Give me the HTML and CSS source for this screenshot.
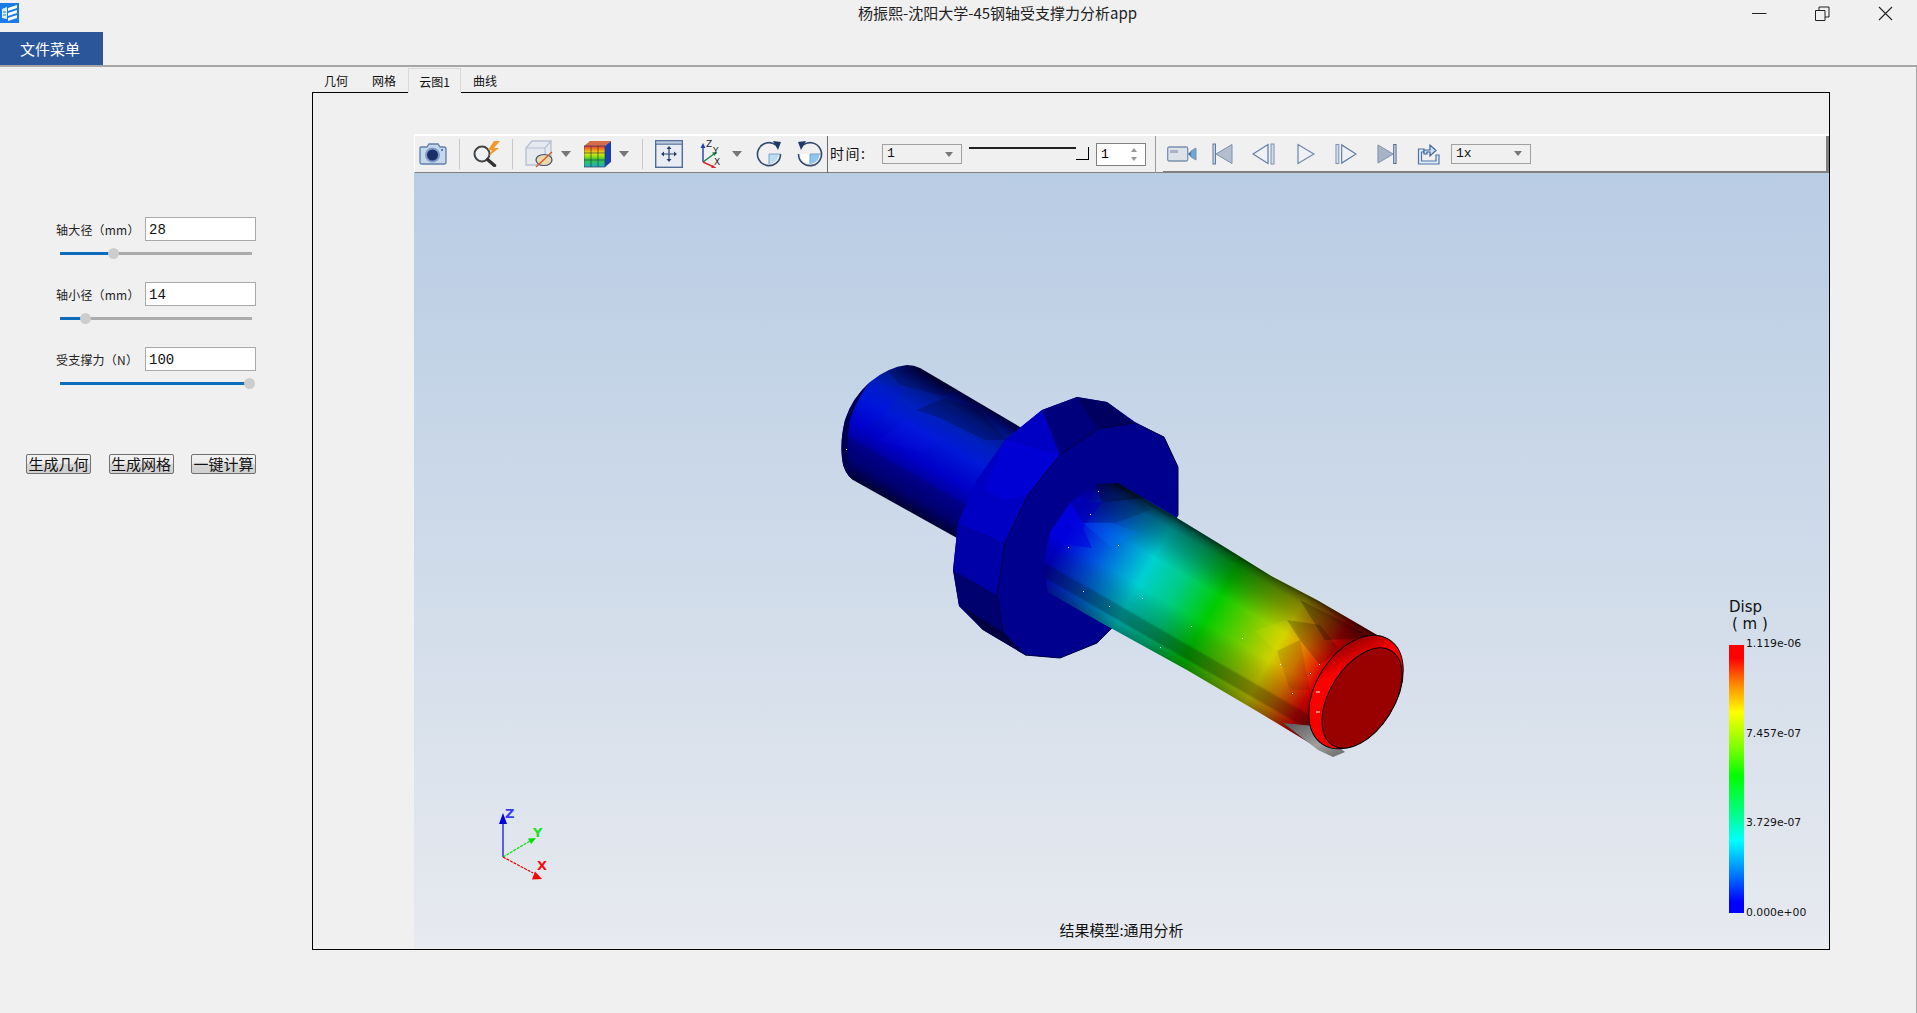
FILE: index.html
```html
<!DOCTYPE html>
<html lang="zh-CN">
<head>
<meta charset="utf-8">
<title>杨振熙-沈阳大学-45钢轴受支撑力分析app</title>
<link rel="stylesheet" href="styles.css">
</head>
<body>
<div class="app">
  <header class="titlebar">
    <svg class="app-icon" viewBox="0 0 19 20"><rect width="19" height="20" fill="#1a7ae8"/><path d="M2 6l5-2v12l-5-1z" fill="#dfeeff"/><path d="M8 5l9-3v3l-9 3zM8 10l9-3v3l-9 3zM8 15l9-3v3l-9 3z" fill="#fff"/><path d="M3 9h3M3 12h3" stroke="#1a7ae8"/></svg>
    <div class="title">杨振熙-沈阳大学-45钢轴受支撑力分析app</div>
    <div class="win-controls">
      <svg class="win-btn" viewBox="0 0 15 15"><path d="M0 7.5h14.5" stroke="#222" fill="none"/></svg>
      <svg class="win-btn" viewBox="0 0 15 15"><path d="M.5 4.5h9.5v10H.5zM4 4.5V1h10v10h-4" stroke="#222" fill="none"/></svg>
      <svg class="win-btn" viewBox="0 0 15 15"><path d="M1 1l13 13M14 1L1 14" stroke="#222" stroke-width="1.1" fill="none"/></svg>
    </div>
  </header>
  <nav class="menubar"><button class="file-menu">文件菜单</button></nav>
  <main class="content">
    <aside class="sidebar">
      <div class="field">
        <div class="field-row"><label class="field-label">轴大径（mm）</label><div class="input">28</div></div>
        <div class="slider"><div class="slider-fill" style="width:28%"><span class="slider-handle"></span></div></div>
      </div>
      <div class="field">
        <div class="field-row"><label class="field-label">轴小径（mm）</label><div class="input">14</div></div>
        <div class="slider"><div class="slider-fill" style="width:13.5%"><span class="slider-handle"></span></div></div>
      </div>
      <div class="field">
        <div class="field-row"><label class="field-label">受支撑力（N）</label><div class="input">100</div></div>
        <div class="slider"><div class="slider-fill" style="width:99%"><span class="slider-handle"></span></div></div>
      </div>
      <div class="actions">
        <button class="action">生成几何</button>
        <button class="action">生成网格</button>
        <button class="action">一键计算</button>
      </div>
    </aside>
    <section class="workspace">
      <div class="tabs">
        <div class="tab">几何</div>
        <div class="tab">网格</div>
        <div class="tab tab-active">云图1</div>
        <div class="tab">曲线</div>
      </div>
      <div class="pane">
        <div class="toolbar">
          <svg class="ml-5 w28" viewBox="0 0 28 22"><path d="M1 5q0-1 1-1h6l2-3h9l2 3h4q2 0 2 2v13q0 2-2 2H3q-2 0-2-2z" fill="#c5d8ee" stroke="#5f7da8" stroke-width="1.3"/><circle cx="13.5" cy="12" r="7.5" fill="#7f9bc4"/><circle cx="13.5" cy="12" r="5.5" fill="#1b2f6b"/><rect x="22" y="6" width="2" height="2" fill="#5f7da8"/></svg>
          <span class="sep ml-12"></span>
          <svg class="ml-12 w29" viewBox="0 0 29 26"><circle cx="10" cy="13" r="7.5" fill="#eef2f5" stroke="#444" stroke-width="2"/><path d="M15.5 18.5l7 6" stroke="#333" stroke-width="3.4" stroke-linecap="round"/><path d="M22 0l-6 9h4l-3 6 10-8h-5l6-7z" fill="#ee9a2a"/></svg>
          <span class="sep ml-11"></span>
          <svg class="ml-12 w28" viewBox="0 0 28 28"><path d="M1 8l6-7h19v17l-6 7H1z" fill="#e6e9ef" stroke="#b8c1d2" stroke-width="1.4"/><path d="M1 8h19v17M20 8l6-7" fill="none" stroke="#b8c1d2" stroke-width="1.2"/><ellipse cx="19" cy="20" rx="8" ry="5.5" fill="#e8d9a8" stroke="#3f4f74" stroke-width="1.2"/><path d="M11 27L27 12" stroke="#d8552a" stroke-width="1.3"/></svg>
          <svg class="ml-8 w10 drop" viewBox="0 0 10 6"><path d="M0 0h10L5 6z" fill="#777"/></svg>
          <svg class="ml-13 w27" viewBox="0 0 27 28"><path d="M0 6l6-5h21L21 6z" fill="#d86a4a"/><path d="M21 6l6-5v21l-6 5z" fill="#1a3fb0"/><defs><linearGradient id="cc" x1="0" y1="0" x2="0" y2="1"><stop offset="0" stop-color="#e33"/><stop offset=".35" stop-color="#ee0"/><stop offset=".65" stop-color="#3c3"/><stop offset="1" stop-color="#2ac"/></linearGradient></defs><rect y="6" width="21" height="21" fill="url(#cc)"/><path d="M0 6h21v21H0zM7 6v21M14 6v21M0 13h21M0 20h21" fill="none" stroke="#2a3a5c" stroke-width=".7"/></svg>
          <svg class="ml-8 w10 drop" viewBox="0 0 10 6"><path d="M0 0h10L5 6z" fill="#777"/></svg>
          <span class="sep ml-13"></span>
          <svg class="ml-12 w28" viewBox="0 0 28 28"><rect x=".7" y=".7" width="26.6" height="26.6" fill="#e9edf3" stroke="#4f6a94" stroke-width="1.4"/><rect x=".7" y=".7" width="26.6" height="3.5" fill="#b8c7dc" stroke="#4f6a94"/><path d="M14 8v12M8 14h12" stroke="#27406b" stroke-width="1.2"/><path d="M14 6l-2.5 3h5zM14 22l-2.5-3h5zM6 14l3-2.5v5zM22 14l-3-2.5v5z" fill="#27406b"/></svg>
          <svg class="ml-16 w24" viewBox="0 0 24 28"><path d="M4 22V6" stroke="#1c3fb5" stroke-width="1.4"/><path d="M4 3L1.5 8h5z" fill="#1c3fb5"/><path d="M4 22L15 14" stroke="#0e8a3a" stroke-width="1.4"/><path d="M18 12l-5 .5 2.500 3.500z" fill="#0e8a3a"/><path d="M4 22l11 5" stroke="#e0262a" stroke-width="1.4"/><path d="M18 28.500l-4.500-3.500-1.500 3.500z" fill="#e0262a"/><text class="axis-letter" x="7" y="7">Z</text><text class="axis-letter" x="14" y="14">Y</text><text class="axis-letter" x="15" y="25">X</text></svg>
          <svg class="ml-9 w10 drop" viewBox="0 0 10 6"><path d="M0 0h10L5 6z" fill="#777"/></svg>
          <svg class="ml-14 w26" viewBox="0 0 26 26"><path d="M13 13h9.500A10 10 0 0 1 13 23z" fill="#bcdcf2"/><path d="M13 13v10M13 13h11" stroke="#7aa2c8"/><path d="M20 4A11.500 11.500 0 1 0 24.500 13" fill="none" stroke="#33496e" stroke-width="1.600"/><path d="M17 0l8 1-3 8z" fill="#1f3a68"/></svg>
          <svg class="ml-15 w26" viewBox="0 0 26 26"><path d="M13 13H3.500A10 10 0 0 0 13 23z" fill="#fff"/><path d="M13 13h9.500A10 10 0 0 1 13 23z" fill="#8cc6ee"/><path d="M13 13v10M13 13h11" stroke="#7aa2c8"/><path d="M6 4A11.500 11.500 0 1 1 1.500 13" fill="none" stroke="#33496e" stroke-width="1.600"/><path d="M9 0L1 1l3 8z" fill="#1f3a68"/></svg>
          <span class="vline ml-5"></span>
          <span class="time-label ml-1">时间:</span>
          <div class="combo"><span>1</span><svg class="combo-arrow" viewBox="0 0 8 5"><path d="M0 0h8L4 5z" fill="#777"/></svg></div>
          <div class="time-slider ml-7"><span class="time-handle"></span></div>
          <div class="spin ml-7"><span>1</span><svg class="spin-arrows" viewBox="0 0 6 13"><path d="M3 0l3 4H0zM3 13l3-4H0z" fill="#999"/></svg></div>
          <span class="vline vline-grey ml-9"></span>
          <div class="play-group ml-7">
            <svg class="ml-4 w30" viewBox="0 0 30 16"><rect x=".7" y="1" width="20" height="14" rx="1.500" fill="#dde2ea" stroke="#7b90b0" stroke-width="1.300"/><rect x="3" y="4" width="8" height="3" fill="#a8b4c6"/><path d="M21 8l3-3v6z" fill="#3a6a98"/><path d="M24 5l5-3v12l-5-3z" fill="#6aaad4" stroke="#7b90b0"/></svg>
            <svg class="ml-15 w21" viewBox="0 0 21 22"><rect x="1" y="1" width="2.500" height="20" fill="#c9d2df" stroke="#5f7aa2"/><path d="M20 1.500v19L4 11z" fill="#b4bfcd" stroke="#7a90b0"/></svg>
            <svg class="ml-19 w23" viewBox="0 0 23 22"><path d="M16 1.500v19L1 11z" fill="#eef1f5" stroke="#5f7aa2" stroke-width="1.200"/><rect x="19" y="1" width="3" height="20" fill="#d6dde7" stroke="#7a90b0"/></svg>
            <svg class="ml-22 w18" viewBox="0 0 18 22"><path d="M1 1.500v19L17 11z" fill="#eef1f5" stroke="#6c84a8" stroke-width="1.200"/></svg>
            <svg class="ml-20 w22" viewBox="0 0 23 22"><rect x="1" y="1" width="3" height="20" fill="#d6dde7" stroke="#7a90b0"/><path d="M7 1.500v19L22 11z" fill="#eef1f5" stroke="#5f7aa2" stroke-width="1.200"/></svg>
            <svg class="ml-20 w20" viewBox="0 0 21 22"><path d="M1 1.500v19L17 11z" fill="#a8b4c6" stroke="#7a90b0"/><rect x="17.500" y="1" width="2.500" height="20" fill="#c9d2df" stroke="#4f6a94"/></svg>
            <svg class="ml-20 w23" viewBox="0 0 23 22"><path d="M7 6H1.500v15H22v-9h-3v6H4.500V9H7z" fill="#e3ecf6" stroke="#4d74a8" stroke-width="1.200"/><path d="M7 11V7h6V2l6 5.500-6 5.500V9H10v2z" fill="#cfe0f2" stroke="#3d6398" stroke-width="1.200"/></svg>
            <div class="combo ml-11"><span class="combo-mono">1x</span><svg class="combo-arrow" viewBox="0 0 8 5"><path d="M0 0h8L4 5z" fill="#777"/></svg></div>
          </div>
        </div>
        <div class="viewer">
          <svg class="scene" viewBox="414 173 1415 775">
            <defs>
              <linearGradient id="leftShaft" gradientUnits="userSpaceOnUse" x1="920" y1="368" x2="855" y2="481">
                <stop offset="0" stop-color="#000030"/><stop offset=".06" stop-color="#000860"/><stop offset=".14" stop-color="#001a90"/><stop offset=".28" stop-color="#0020c0"/><stop offset=".42" stop-color="#0018d8"/><stop offset=".62" stop-color="#0000c8"/><stop offset=".72" stop-color="#0000a8"/><stop offset=".74" stop-color="#00008c"/><stop offset=".88" stop-color="#000070"/><stop offset="1" stop-color="#000030"/>
              </linearGradient>
              <linearGradient id="axis" gradientUnits="userSpaceOnUse" x1="1060" y1="545" x2="1320" y2="693">
                <stop offset="0" stop-color="#0000d8"/><stop offset=".12" stop-color="#0050e0"/><stop offset=".293" stop-color="#00d0d0"/><stop offset=".42" stop-color="#00cc80"/><stop offset=".55" stop-color="#00cc00"/><stop offset=".68" stop-color="#70cc00"/><stop offset=".8" stop-color="#d0d000"/><stop offset=".88" stop-color="#e08000"/><stop offset=".97" stop-color="#e00000"/><stop offset="1" stop-color="#c00000"/>
              </linearGradient>
              <linearGradient id="shade" gradientUnits="userSpaceOnUse" x1="1118" y1="483" x2="1053" y2="596">
                <stop offset="0" stop-color="#000" stop-opacity=".85"/><stop offset=".05" stop-color="#000" stop-opacity=".55"/><stop offset=".1" stop-color="#000" stop-opacity=".38"/><stop offset=".2" stop-color="#000" stop-opacity=".26"/><stop offset=".3" stop-color="#000" stop-opacity=".1"/><stop offset=".36" stop-color="#000" stop-opacity="0"/><stop offset=".6" stop-color="#000" stop-opacity="0"/><stop offset=".7" stop-color="#000" stop-opacity=".12"/><stop offset=".8" stop-color="#000" stop-opacity=".2"/><stop offset=".82" stop-color="#000" stop-opacity=".38"/><stop offset=".9" stop-color="#000" stop-opacity=".42"/><stop offset=".92" stop-color="#000" stop-opacity=".25"/><stop offset="1" stop-color="#000" stop-opacity=".4"/>
              </linearGradient>
              <linearGradient id="tipGrey" x1="0" y1="0" x2="1" y2="1"><stop offset="0" stop-color="#555"/><stop offset=".6" stop-color="#a0a0a0"/><stop offset="1" stop-color="#666"/></linearGradient>
              <linearGradient id="ringRed" x1="1" y1="0" x2="0" y2="1"><stop offset="0" stop-color="#600000"/><stop offset=".18" stop-color="#b00000"/><stop offset=".32" stop-color="#ff0000"/><stop offset=".85" stop-color="#f00000"/><stop offset="1" stop-color="#c80000"/></linearGradient>
            </defs>

            <path d="M907 365Q914 365 920 368L1020 427L1060 460L957 538L853 480Q843 472 842 458Q840 440 845 420Q852 398 870 382Q888 367 907 365Z" fill="url(#leftShaft)"/>
            <polygon points="888,371 920,368 958,390 944,396 900,385" fill="#000" opacity=".18"/>
            <polygon points="916,410 945,398 980,410 1007,440 985,440 940,418" fill="#000" opacity=".2"/>
            <polygon points="870,382 905,388 880,420 857,430" fill="#00f" opacity=".12"/>
            <polygon points="880,440 905,420 950,438 920,452" fill="#22f" opacity=".1"/>
            <path d="M870 382Q852 398 845 420Q840 440 842 458Q843 472 853 480L848 462Q846 440 850 420Q856 400 870 382Z" fill="#000050"/>

            <polygon points="1042,410 1077,397 1107,402 1135,422 1164,437 1178,467 1178,515 1113,627 1097,643 1060,658 1025,655 983,630 959,606 953,570 958,523 977,480 1005,440" fill="#0000b0"/>
            <polygon points="1042,410 1077,397 1135,423 1098,429 1060,455" fill="#00007c"/>
            <polygon points="1077,397 1107,402 1135,423 1098,429" fill="#000060"/>
            <polygon points="1005,440 1042,410 1060,455 1028,495 1005,543 958,523 977,480" fill="#0000c4"/>
            <polygon points="1005,440 1060,455 1028,495 1005,500 985,490" fill="#0000d4"/>
            <polygon points="958,523 1005,543 997,595 953,570" fill="#0000a8"/>
            <polygon points="953,570 997,595 1003,632 983,630 959,606" fill="#00006e"/>
            <polygon points="963,607 1003,632 1025,655 983,630" fill="#000040"/>
            <polygon points="1135,423 1098,429 1060,455 1028,495 1005,543 997,595 1003,632 1025,655 1060,658 1097,643 1113,627 1178,515 1178,467 1164,437" fill="#00008e" stroke="#000040"/>

            <polygon points="1095,484 1118,483 1177,518 1218,543 1273,577 1317,600 1377,635 1395,680 1325,748 1313,745 1260,713 1187,670 1100,622 1048,592 1043,567 1050,532 1070,503" fill="url(#axis)"/>
            <polygon points="1095,484 1118,483 1177,518 1218,543 1273,577 1317,600 1377,635 1395,680 1325,748 1313,745 1260,713 1187,670 1100,622 1048,592 1043,567 1050,532 1070,503" fill="url(#shade)"/>
            <polygon points="1050,532 1070,503 1102,502 1083,528 1092,548 1068,545" fill="#0000e0" opacity=".55"/>
            <polygon points="1083,523 1110,522 1140,533 1110,546" fill="#0080ff" opacity=".2"/>
            <polygon points="1070,503 1102,502 1135,495 1150,510 1115,523 1083,523" fill="#000" opacity=".15"/>
            <polygon points="1095,484 1118,483 1145,498 1102,502" fill="#000" opacity=".3"/>
            <polygon points="1287,620 1300,640 1277,651 1254,631" fill="#ff0" opacity=".1"/>
            <polygon points="1277,651 1300,640 1310,690 1290,690" fill="#000" opacity=".1"/>
            <polygon points="1287,620 1320,625 1340,650 1320,665 1300,640" fill="#000" opacity=".2"/>
            <polygon points="1300,600 1340,620 1372,638 1325,640" fill="#000" opacity=".25"/>
            <polygon points="1283,723 1314,726 1345,752 1333,757 1318,750" fill="url(#tipGrey)"/>

            <ellipse cx="1356" cy="692" rx="62" ry="40" transform="rotate(-58 1356 692)" fill="url(#ringRed)" stroke="#000" stroke-width="1"/>
            <ellipse cx="1362" cy="698" rx="55.500" ry="32" transform="rotate(-58 1362 698)" fill="#990000" stroke="#000" stroke-width="1"/>
            <path d="M1316 692h4M1316 712h4" stroke="#fff" stroke-width="1"/>

            <g fill="#fff">
              <rect x="846" y="449" width="1" height="1"/><rect x="1068" y="547" width="1" height="1"/><rect x="1098" y="491" width="1" height="1"/><rect x="1090" y="514" width="1" height="1"/><rect x="1118" y="545" width="1" height="1"/><rect x="1083" y="591" width="1" height="1"/><rect x="1142" y="598" width="1" height="1"/><rect x="1109" y="606" width="1" height="1"/><rect x="1191" y="626" width="1" height="1"/><rect x="1160" y="647" width="1" height="1"/><rect x="1242" y="638" width="1" height="1"/><rect x="1280" y="664" width="1" height="1"/><rect x="1319" y="664" width="1" height="1"/><rect x="1310" y="673" width="1" height="1"/><rect x="1292" y="693" width="1" height="1"/>
            </g>

            <path d="M503 857V820" stroke="#0000e0" stroke-width="1.200"/>
            <path d="M503 813l-4 11h8z" fill="#0000e0"/>
            <path d="M503 857l27-16" stroke="#00e000" stroke-width="1.200" stroke-dasharray="3 1"/>
            <path d="M536 838l-8 .5 3 5.500z" fill="#00e000"/>
            <path d="M503 857l30 16" stroke="#e00000" stroke-width="1.200" stroke-dasharray="3 1"/>
            <path d="M542 879l-10 .5 3-8z" fill="#ff0000"/>
            <text class="triad-letter triad-z" x="505" y="818">Z</text>
            <text class="triad-letter triad-y" x="533" y="837">Y</text>
            <text class="triad-letter triad-x" x="537" y="870">X</text>
          </svg>
          <div class="legend">
            <div class="legend-title">Disp</div>
            <div class="legend-unit">( m )</div>
            <div class="legend-body">
              <div class="legend-bar"></div>
              <div class="legend-labels"><span>1.119e-06</span><span>7.457e-07</span><span>3.729e-07</span><span>0.000e+00</span></div>
            </div>
          </div>
          <div class="caption">结果模型:通用分析</div>
        </div>
      </div>
    </section>
  </main>
</div>
</body>
</html>
```

FILE: styles.css
```css
* { box-sizing: border-box; }
html, body { margin: 0; height: 100%; }
body {
  background: #f0f0f0;
  color: #000;
  font-family: "Noto Sans CJK SC", "Noto Sans", sans-serif;
  overflow: hidden;
}
.app { height: 1013px; display: flex; flex-direction: column; }

.titlebar { height: 32px; display: flex; align-items: flex-start; flex: none; }
.app-icon { width: 19px; height: 20px; margin-top: 3px; flex: none; }
.title {
  margin-left: 839px;
  margin-top: 3px;
  font-size: 15px;
  line-height: 20px;
  color: #222;
  white-space: nowrap;
}
.win-controls { margin-left: auto; display: flex; gap: 48px; padding: 6px 24px 0 0; }
.win-btn { width: 15px; height: 15px; display: block; }

.menubar { height: 35px; flex: none; border-bottom: 2px solid #a6a6a6; }
.file-menu {
  display: block;
  width: 103px;
  height: 33px;
  border: 0;
  padding: 0 3px 0 0;
  background: #2b579a;
  color: #fff;
  font: 15px/33px "Noto Sans CJK SC", sans-serif;
}

.content { flex: 1; display: flex; border-right: 1px solid #a6a6a6; }

.sidebar { width: 312px; flex: none; padding-top: 150px; display: flex; flex-direction: column; gap: 23px; }
.field-row { display: flex; align-items: center; height: 24px; }
.field-label {
  width: 145px;
  padding-left: 56px;
  font-size: 12px;
  letter-spacing: .2px;
  color: #222;
  white-space: nowrap;
}
.input {
  width: 111px;
  height: 24px;
  border: 1px solid #a9a9a9;
  background: #fff;
  padding-left: 3px;
  font: 14px/24px "Liberation Mono", monospace;
  color: #111;
}
.slider { margin: 7px 0 0 60px; width: 192px; height: 11px; position: relative; }
.slider::before {
  content: "";
  position: absolute;
  left: 0; right: 0; top: 4px;
  height: 3px;
  background: #ababab;
}
.slider-fill { position: absolute; left: 0; top: 4px; height: 3px; background: #0f6cbd; }
.slider-handle {
  position: absolute;
  right: -5px;
  top: -4px;
  width: 11px;
  height: 11px;
  border-radius: 50%;
  background: #cdcdcd;
}
.actions { margin: 42px 0 0 26px; display: flex; gap: 17.5px; }
.action {
  width: 65px;
  height: 20px;
  padding: 0;
  border: 1px solid #707070;
  border-radius: 2px;
  background: linear-gradient(#f2f2f2 0, #ebebeb 50%, #d6d6d6 52%, #d0d0d0 100%);
  color: #111;
  font: 15px/18px "Noto Sans CJK SC", sans-serif;
  white-space: nowrap;
}

.workspace { width: 1518px; flex: none; padding-top: 1px; }
.tabs { display: flex; height: 25px; position: relative; z-index: 1; }
.tab { width: 48px; text-align: center; font-size: 12px; line-height: 25px; color: #111; }
.tab-active { width: 53px; border: 1px solid #d9d9d9; border-bottom: 1px solid #f0f0f0; }
.pane {
  margin-top: -1px;
  height: 858px;
  border: 1px solid #000;
  padding: 41px 0 0 102px;
  display: flex;
  flex-direction: column;
}

.toolbar {
  height: 39px;
  flex: none;
  display: flex;
  align-items: center;
  background: #f0f0f0;
  border-top: 2px solid #fff;
  border-left: 1px solid #fff;
  border-bottom: 1px solid #808080;
  margin-left: -1px;
}
.toolbar svg { flex: none; display: block; }
.sep { width: 1px; height: 30px; background: #c8c8c8; flex: none; }
.vline { width: 1px; height: 37px; background: #6a6a6a; flex: none; }
.vline-grey { background: #9a9a9a; }
.w10 { width: 10px; height: 6px; }
.w18 { width: 18px; height: 22px; }
.w20 { width: 20px; height: 22px; }
.w21 { width: 21px; height: 22px; }
.w22 { width: 22px; height: 22px; }
.w23 { width: 23px; height: 22px; }
.w24 { width: 24px; height: 28px; }
.w26 { width: 26px; height: 26px; }
.w27 { width: 27px; height: 28px; }
.w28 { width: 28px; height: auto; }
.w29 { width: 29px; height: 26px; }
.w30 { width: 30px; height: 16px; }
.ml-1 { margin-left: 2px; }
.ml-4 { margin-left: 4px; }
.ml-5 { margin-left: 4px; }
.ml-7 { margin-left: 7px; }
.ml-8 { margin-left: 8px; }
.ml-9 { margin-left: 9px; }
.ml-11 { margin-left: 11px; }
.ml-12 { margin-left: 12px; }
.ml-13 { margin-left: 13px; }
.ml-14 { margin-left: 14px; }
.ml-15 { margin-left: 15px; }
.ml-16 { margin-left: 16px; }
.ml-19 { margin-left: 19px; }
.ml-20 { margin-left: 20px; }
.ml-22 { margin-left: 22px; }
.axis-letter { font: 9px "DejaVu Sans", sans-serif; fill: #222; }

.time-label { width: 52px; flex: none; font-size: 14px; letter-spacing: 1.5px; line-height: 20px; margin-top: -2px; white-space: nowrap; color: #111; }
.combo {
  width: 80px;
  height: 20px;
  flex: none;
  border: 1px solid #a0a0a0;
  display: flex;
  align-items: center;
  justify-content: space-between;
  padding: 0 7px 0 4px;
  font: 13px/18px "Liberation Mono", monospace;
  color: #111;
}
.combo-mono { font: 13px/18px "Liberation Mono", monospace; }
.combo-arrow { width: 8px; height: 5px; margin-right: 1px; }
.time-slider {
  width: 120px;
  height: 13px;
  flex: none;
  align-self: flex-start;
  margin-top: 11px;
  border-top: 2px solid #222;
  position: relative;
}
.time-handle {
  position: absolute;
  right: 0;
  top: -2px;
  width: 13px;
  height: 13px;
  background: #f0f0f0;
  border-right: 1px solid #000;
  border-bottom: 1px solid #000;
}
.spin {
  width: 50px;
  height: 23px;
  flex: none;
  border: 1px solid #808080;
  background: #fff;
  display: flex;
  align-items: center;
  justify-content: space-between;
  padding: 0 8px 0 4px;
  font: 13px "Liberation Mono", monospace;
}
.spin-arrows { width: 6px; height: 13px; }
.play-group {
  flex: 1;
  align-self: stretch;
  display: flex;
  align-items: center;
  margin-bottom: -1px;
  border-bottom: 2px solid #808080;
  border-right: 3px solid #808080;
}

.viewer {
  flex: 1;
  position: relative;
  margin-left: -1px;
  background: linear-gradient(#b8cce4 0, #e7eaef 100%);
  overflow: hidden;
}
.scene { width: 1415px; height: 775px; display: block; }
.triad-letter { font: bold 13px "DejaVu Sans", sans-serif; }
.triad-z { fill: #3a3af0; }
.triad-y { fill: #20e020; }
.triad-x { fill: #f01010; }

.legend { position: absolute; left: 1315px; top: 426px; font-family: "DejaVu Sans", sans-serif; color: #111; }
.legend-title { font-size: 15px; line-height: 17px; }
.legend-unit { font-size: 15px; line-height: 17px; padding-left: 3px; }
.legend-body { display: flex; margin-top: 12px; }
.legend-bar {
  width: 15px;
  height: 268px;
  background: linear-gradient(#ff0000 0, #ff0000 5%, #ff8000 14%, #ffff00 25%, #80ff00 38%, #00ff00 49%, #00ff80 62%, #00ffff 73%, #0080ff 85%, #0000ff 96%, #0000ff 100%);
}
.legend-labels {
  height: 283px;
  margin: -8px 0 0 2px;
  display: flex;
  flex-direction: column;
  justify-content: space-between;
  font-size: 10.8px;
  line-height: 14px;
}
.caption {
  position: absolute;
  left: 0;
  right: 0;
  bottom: 9px;
  text-align: center;
  font-size: 15px;
  line-height: 20px;
  color: #111;
}
```
